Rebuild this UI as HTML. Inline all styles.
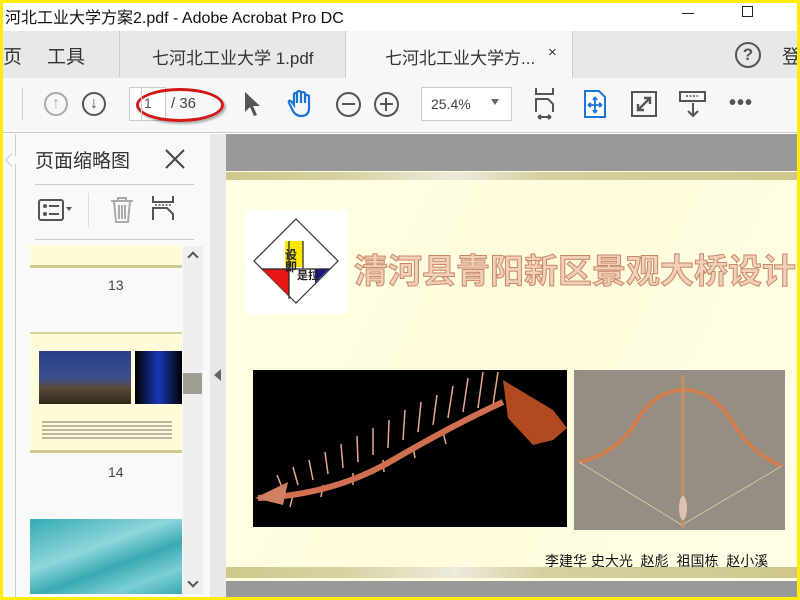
<!DOCTYPE html>
<html><head><meta charset="utf-8"><style>
*{margin:0;padding:0;box-sizing:border-box}
body{width:800px;height:600px;overflow:hidden;position:relative;background:#fff;font-family:"Liberation Sans","Noto Sans CJK SC",sans-serif}
.a{position:absolute}
.frame{position:absolute;left:0;top:0;width:800px;height:600px;border:3px solid #ffee00;z-index:50;pointer-events:none}
.cj{font-family:"Liberation Sans","Noto Sans CJK SC",sans-serif}
.ic{position:absolute}
</style></head><body>
<div class="a" style="left:0;top:0;width:800px;height:31px;background:#fff"></div>
<div class="a cj" style="left:5px;top:4px;font-size:16px;color:#111">河北工业大学方案2.pdf - Adobe Acrobat Pro DC</div>
<div class="a" style="left:682px;top:13px;width:12px;height:1px;background:#222"></div>
<div class="a" style="left:742px;top:6px;width:11px;height:11px;border:1px solid #222"></div>
<div class="a" style="left:0;top:31px;width:800px;height:47px;background:#e8e8e8"></div>
<div class="a" style="left:119px;top:31px;width:1px;height:47px;background:#ccc"></div>
<div class="a" style="left:345px;top:31px;width:228px;height:48px;background:#f7f7f7;border-left:1px solid #ccc;border-right:1px solid #ccc"></div>
<div class="a cj" style="left:3px;top:42px;font-size:19px;color:#333">页</div>
<div class="a cj" style="left:47px;top:42px;font-size:19px;color:#333">工具</div>
<div class="a cj" style="left:152px;top:44px;font-size:17px;color:#333">七河北工业大学 1.pdf</div>
<div class="a cj" style="left:385px;top:44px;font-size:17px;color:#333">七河北工业大学方...</div>
<div class="a" style="left:548px;top:44px;font-size:15px;color:#333">×</div>
<div class="a" style="left:735px;top:42px;width:26px;height:26px;border:2px solid #555;border-radius:50%;text-align:center;font-size:17px;font-weight:bold;color:#555;line-height:22px">?</div>
<div class="a cj" style="left:782px;top:42px;font-size:19px;color:#333">登</div>
<div class="a" style="left:0;top:78px;width:800px;height:55px;background:#f7f7f7;border-bottom:1px solid #ccc"></div>
<div class="a" style="left:22px;top:88px;width:1px;height:32px;background:#ccc"></div>
<div class="a" style="left:44px;top:92px;width:24px;height:24px;border:2px solid #aaa;border-radius:50%;text-align:center;color:#aaa;font-size:16px;line-height:19px;font-weight:bold">↑</div>
<div class="a" style="left:82px;top:92px;width:24px;height:24px;border:2px solid #555;border-radius:50%;text-align:center;color:#555;font-size:16px;line-height:19px;font-weight:bold">↓</div>
<div class="a" style="left:129px;top:87px;width:37px;height:34px;background:#fff;border:1px solid #ccc"></div>
<div class="a" style="left:144px;top:95px;font-size:14px;color:#555">1</div>
<div class="a" style="left:171px;top:95px;font-size:15px;color:#444">/ 36</div>
<div class="a" style="left:136px;top:88px;width:88px;height:34px;border:3px solid #d01818;border-radius:50%;box-shadow:2px 2px 2px rgba(0,0,0,.3)"></div>
<div class="a" style="left:141px;top:87px;width:1px;height:34px;background:#ccc"></div>
<svg class="ic" style="left:242px;top:90px" width="20" height="28"><path d="M3 2 L3 22 L8 17 L12 26 L15 25 L11 16 L18 16 Z" fill="#555"/></svg>
<svg class="ic" style="left:285px;top:89px" width="30" height="30"><path d="M8 22 L4 14 Q3 11 6 12 L9 16 L9 5 Q10 3 12 5 L12 14 L12 3 Q14 1 16 3 L16 14 L16 4 Q18 2 20 4 L20 14 L20 7 Q22 5 24 7 L24 19 Q24 27 16 27 Q11 27 8 22 Z" fill="none" stroke="#1a73d8" stroke-width="2.2"/></svg>
<div class="a" style="left:336px;top:92px;width:25px;height:25px;border:2px solid #555;border-radius:50%"></div>
<div class="a" style="left:342px;top:103px;width:13px;height:2px;background:#555"></div>
<div class="a" style="left:374px;top:92px;width:25px;height:25px;border:2px solid #555;border-radius:50%"></div>
<div class="a" style="left:380px;top:103px;width:13px;height:2px;background:#555"></div>
<div class="a" style="left:385px;top:98px;width:2px;height:13px;background:#555"></div>
<div class="a" style="left:421px;top:87px;width:91px;height:34px;background:#fff;border:1px solid #ccc"></div>
<div class="a" style="left:431px;top:96px;font-size:14px;color:#444">25.4%</div>
<div class="a" style="left:491px;top:99px;border-left:4px solid transparent;border-right:4px solid transparent;border-top:6px solid #666"></div>
<svg class="ic" style="left:530px;top:86px" width="30" height="36"><path d="M6 2 L6 8 L23 8 L23 2 M6 26 L6 13 L18 13 L23 18 L23 26 M8 31 L21 31 M8 31 l3 -2 M8 31 l3 2 M21 31 l-3 -2 M21 31 l-3 2" fill="none" stroke="#555" stroke-width="2"/></svg>
<svg class="ic" style="left:582px;top:89px" width="26" height="30"><path d="M3 2 L17 2 L23 8 L23 28 L3 28 Z" fill="#fff" stroke="#1a73d8" stroke-width="2"/><path d="M13 8 L13 24 M6 16 L20 16 M13 8 l-2 3 M13 8 l2 3 M13 24 l-2 -3 M13 24 l2 -3 M6 16 l3 -2 M6 16 l3 2 M20 16 l-3 -2 M20 16 l-3 2" stroke="#1a73d8" stroke-width="1.8" fill="none"/></svg>
<svg class="ic" style="left:630px;top:90px" width="28" height="28"><rect x="2" y="2" width="24" height="24" fill="none" stroke="#555" stroke-width="2"/><path d="M8 20 L20 8 M14 8 L20 8 L20 14 M8 14 L8 20 L14 20" stroke="#555" stroke-width="2.4" fill="none"/></svg>
<svg class="ic" style="left:678px;top:90px" width="30" height="30"><rect x="2" y="2" width="25" height="9" fill="none" stroke="#555" stroke-width="2"/><path d="M8 6 h12" stroke="#555" stroke-width="1.5" stroke-dasharray="2 1.5"/><path d="M15 13 L15 26 M10 21 L15 26 L20 21" stroke="#555" stroke-width="2" fill="none"/></svg>
<div class="a" style="left:729px;top:92px;font-size:20px;color:#555;letter-spacing:1px;font-weight:bold">•••</div>
<div class="a" style="left:0;top:134px;width:210px;height:466px;background:#f9f9f9"></div>
<div class="a" style="left:15px;top:134px;width:1px;height:466px;background:#ccc"></div>
<div class="a" style="left:7px;top:155px;width:10px;height:10px;border-left:1px solid #ccc;border-bottom:1px solid #ccc;transform:rotate(45deg);background:#f9f9f9"></div>
<div class="a cj" style="left:35px;top:146px;font-size:19px;color:#333">页面缩略图</div>
<svg class="ic" style="left:164px;top:148px" width="22" height="22"><path d="M2 2 L20 20 M20 2 L2 20" stroke="#444" stroke-width="2"/></svg>
<div class="a" style="left:35px;top:184px;width:159px;height:1px;background:#ccc"></div>
<svg class="ic" style="left:37px;top:196px" width="40" height="28"><rect x="2" y="4" width="24" height="20" rx="2" fill="none" stroke="#555" stroke-width="2"/><circle cx="8" cy="10" r="2" fill="#555"/><circle cx="8" cy="18" r="2" fill="#555"/><path d="M12 10h10M12 18h10" stroke="#555" stroke-width="2"/><path d="M29 11 l6 0 l-3 4z" fill="#555"/></svg>
<div class="a" style="left:88px;top:193px;width:1px;height:34px;background:#ddd"></div>
<svg class="ic" style="left:108px;top:195px" width="28" height="30"><path d="M3 6 h22 M10 6 V3 h8 v3 M6 6 l2 21 h12 l2 -21 M11 10 v14 M14 10 v14 M17 10 v14" stroke="#aaa" stroke-width="2" fill="none"/></svg>
<svg class="ic" style="left:150px;top:194px" width="28" height="30"><path d="M3 2 v6 h20 v-6 M3 26 v-12 h14 l6 6 v6" stroke="#555" stroke-width="2" fill="none"/><path d="M5 11 h16" stroke="#555" stroke-width="1.5" stroke-dasharray="2 1.5"/></svg>
<div class="a" style="left:35px;top:239px;width:159px;height:1px;background:#ccc"></div>
<div class="a" style="left:30px;top:245px;width:152px;height:23px;background:#fffbd8;border-bottom:3px solid #cfc88f"></div>
<div class="a" style="left:108px;top:277px;font-size:14px;color:#444">13</div>
<div class="a" style="left:30px;top:332px;width:152px;height:121px;background:#fffbd8;border-top:2px solid #d8d29c;border-bottom:3px solid #cfc88f"></div>
<div class="a" style="left:39px;top:351px;width:92px;height:53px;background:linear-gradient(#2a3e8a,#3c4f8c 50%,#5a4a3a 70%,#302818)"></div>
<div class="a" style="left:135px;top:351px;width:47px;height:53px;background:linear-gradient(90deg,#000,#1838b8 50%,#000)"></div>
<div class="a" style="left:42px;top:419px;width:130px;height:20px;background:repeating-linear-gradient(#fffbd8 0 2px,#8a8a7a 2px 4px);opacity:.6"></div>
<div class="a" style="left:108px;top:464px;font-size:14px;color:#444">14</div>
<div class="a" style="left:30px;top:519px;width:152px;height:75px;background:linear-gradient(160deg,#35aab4,#8fd6da 40%,#3aa8b4 60%,#7ccfd4 80%,#3aa8b4)"></div>
<div class="a" style="left:183px;top:246px;width:20px;height:348px;background:#efefef"></div>
<div class="a" style="left:183px;top:373px;width:19px;height:21px;background:#a0a090"></div>
<div class="a" style="left:189px;top:253px;width:8px;height:8px;border-left:2px solid #555;border-top:2px solid #555;transform:rotate(45deg)"></div>
<div class="a" style="left:189px;top:578px;width:8px;height:8px;border-right:2px solid #555;border-bottom:2px solid #555;transform:rotate(45deg)"></div>
<div class="a" style="left:210px;top:134px;width:16px;height:466px;background:#e8e8e8"></div>
<div class="a" style="left:214px;top:369px;border-top:6px solid transparent;border-bottom:6px solid transparent;border-right:7px solid #666"></div>
<div class="a" style="left:226px;top:134px;width:574px;height:466px;background:#999"></div>
<div class="a" style="left:226px;top:171px;width:574px;height:410px;background:linear-gradient(115deg,#ffffe4,#fffcdc 50%,#ffffe6)"></div>
<div class="a" style="left:226px;top:172px;width:574px;height:8px;background:linear-gradient(90deg,#cfc88c,#d6d2a0 20%,#eeeadc 40%,#d6d0a0 55%,#cfc88c)"></div>
<div class="a" style="left:226px;top:567px;width:574px;height:11px;background:linear-gradient(90deg,#cfc88c,#d6d2a0 20%,#eeeadc 40%,#d6d0a0 55%,#cfc88c)"></div>
<div class="a" style="left:245px;top:211px;width:103px;height:103px;background:#fff"></div>
<svg class="ic" style="left:245px;top:211px" width="103" height="103"><polygon points="51,8 93,50 51,92 9,50" fill="#fff" stroke="#333" stroke-width="1.2"/><polygon points="17,58 44,58 44,85" fill="#e81818"/><polygon points="70,58 84,58 70,72" fill="#1a1a80"/><rect x="40" y="30" width="18" height="26" fill="#ffe800"/><path d="M44 30 V88 M17 58 H85 M58 30 V58" stroke="#222" stroke-width="1.2"/><text x="40" y="48" font-size="12" font-weight="bold" fill="#222" font-family="Noto Sans CJK SC">设</text><text x="40" y="60" font-size="12" font-weight="bold" fill="#222" font-family="Noto Sans CJK SC">即</text><text x="52" y="68" font-size="11" font-weight="bold" fill="#222" font-family="Noto Sans CJK SC">是拉</text></svg>
<div class="a cj" style="left:354px;top:244px;font-size:34px;font-weight:bold;color:#f2d0b8;-webkit-text-stroke:1px #c88868;white-space:nowrap">清河县青阳新区景观大桥设计</div>
<div class="a" style="left:253px;top:370px;width:314px;height:157px;background:#000;overflow:hidden">
<svg width="314" height="157"><g stroke="#e8a890" stroke-width="1.5"><path d="M30 120 l-6 -15 M45 115 l-5 -18 M60 110 l-4 -20 M75 104 l-3 -22 M90 98 l-2 -24 M105 92 l-1 -26 M120 85 l0 -27 M135 78 l1 -28 M150 70 l2 -30 M165 62 l3 -30 M180 55 l4 -30 M195 48 l5 -32 M210 42 l5 -34 M225 38 l5 -36 M240 35 l5 -33 M40 125 l-3 12 M70 115 l-2 12 M100 103 l0 12 M130 90 l1 12 M160 76 l2 12 M190 62 l3 12"/></g><path d="M5 128 Q80 125 140 90 Q200 55 250 32" stroke="#d07050" stroke-width="6" fill="none"/><path d="M2 128 L35 112 L30 135 Z" fill="#d08060"/><path d="M250 10 L255 48 L280 75 L300 70 L314 58 L300 40 Z" fill="#b04a20"/></svg></div>
<div class="a" style="left:574px;top:370px;width:211px;height:160px;background:#948e84">
<svg width="211" height="160"><path d="M5 92 Q40 85 60 55 Q80 20 110 20 Q140 20 160 55 Q180 85 208 96" fill="none" stroke="#d08050" stroke-width="4"/><path d="M5 92 L108 155 L208 96" stroke="#d0c8a0" stroke-width="1" fill="none"/><path d="M109 5 V158" stroke="#c89060" stroke-width="3"/><ellipse cx="109" cy="138" rx="4" ry="12" fill="#e0c0b0"/></svg></div>
<div class="a cj" style="left:545px;top:551px;font-size:14px;color:#111;white-space:pre">李建华 史大光  赵彪  祖国栋  赵小溪</div>
<div class="frame"></div>
</body></html>
